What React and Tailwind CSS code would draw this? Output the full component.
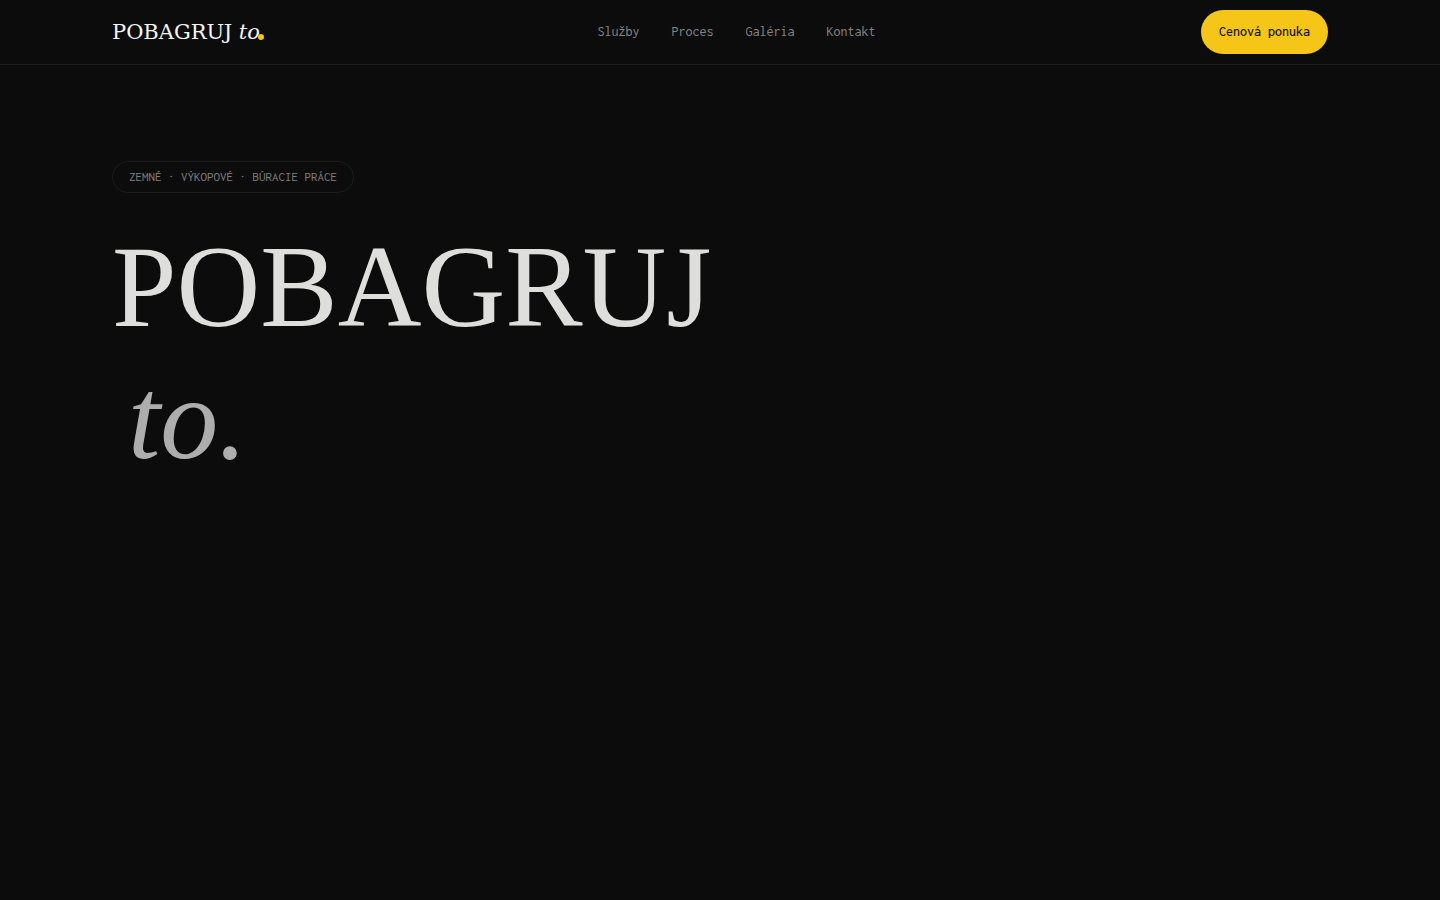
const links = [
  { label: 'Služby', href: '#sluzby' },
  { label: 'Proces', href: '#proces' },
  { label: 'Galéria', href: '#galeria' },
  { label: 'Kontakt', href: '#kontakt' },
];

function Header() {
  return (
    <header className="border-b border-[#1c1c1c]">
      <div className="mx-auto flex h-16 max-w-[1280px] items-center justify-between px-8">
        <a
          href="#top"
          className="relative pr-3 font-['DejaVu_Serif',serif] text-[21px] leading-7 whitespace-nowrap text-[#f5f5f3]"
        >
          POBAGRUJ <em>to</em>
          <span className="absolute right-2 bottom-[6px] size-[6px] rounded-full bg-[#f5c518]" />
        </a>
        <nav className="flex gap-8 font-['Inconsolata','Noto_Sans_Mono_CJK_SC','DejaVu_Sans_Mono',monospace] text-[14px] leading-4 text-[#858585]">
          {links.map((link) => (
            <a key={link.href} href={link.href}>
              {link.label}
            </a>
          ))}
        </nav>
        <button
          type="button"
          className="h-11 rounded-full bg-[#f5c518] px-[18px] font-['Inconsolata','Noto_Sans_Mono_CJK_SC','DejaVu_Sans_Mono',monospace] text-[14px] leading-4 font-medium text-[#0c0c0c]"
        >
          Cenová ponuka
        </button>
      </div>
    </header>
  );
}

function Hero() {
  return (
    <main className="mx-auto w-full max-w-[1280px] grow px-8 pt-24">
      <p className="w-fit rounded-full border border-[#1c1c1c] px-4 py-[7px] font-['Inconsolata','Noto_Sans_Mono_CJK_SC','DejaVu_Sans_Mono',monospace] text-[13px] leading-4 whitespace-nowrap text-[#808080] uppercase">
        Zemné · Výkopové · Búracie práce
      </p>
      <h1 className="mt-7 font-['Liberation_Serif',serif] text-[116px] leading-[132px] text-[#dededc]">
        <span className="block">POBAGRUJ</span>
        <em className="block pl-4 text-[#adadad]">to.</em>
      </h1>
    </main>
  );
}

export default function App() {
  return (
    <div id="top" className="flex min-h-screen flex-col bg-[#0c0c0c]">
      <Header />
      <Hero />
    </div>
  );
}
